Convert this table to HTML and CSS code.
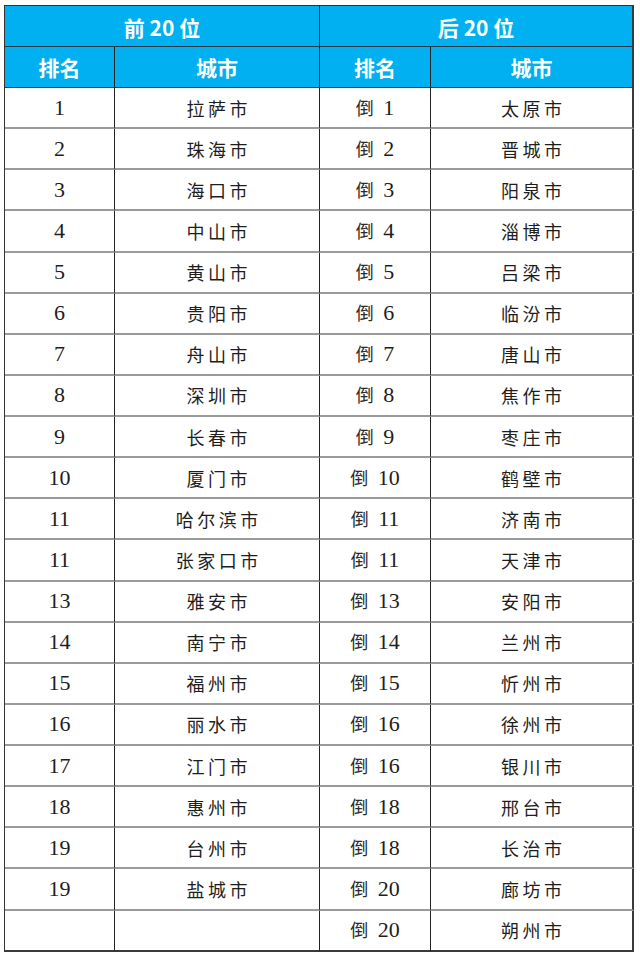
FILE: index.html
```html
<!DOCTYPE html>
<html lang="zh-CN">
<head>
<meta charset="utf-8">
<title>城市排名</title>
<link rel="stylesheet" href="styles.css">
</head>
<body>
<table class="rank">
  <colgroup>
    <col class="c1"><col class="c2"><col class="c3"><col class="c4">
  </colgroup>
  <thead>
    <tr class="h1">
      <th colspan="2">前 20 位</th>
      <th colspan="2" class="last">后 20 位</th>
    </tr>
    <tr class="h2">
      <th>排名</th><th>城市</th><th>排名</th><th class="last">城市</th>
    </tr>
  </thead>
  <tbody>
    <tr><td class="num">1</td><td class="city">拉萨市</td><td class="num"><span class="dao">倒</span> 1</td><td class="city last">太原市</td></tr>
    <tr><td class="num">2</td><td class="city">珠海市</td><td class="num"><span class="dao">倒</span> 2</td><td class="city last">晋城市</td></tr>
    <tr><td class="num">3</td><td class="city">海口市</td><td class="num"><span class="dao">倒</span> 3</td><td class="city last">阳泉市</td></tr>
    <tr><td class="num">4</td><td class="city">中山市</td><td class="num"><span class="dao">倒</span> 4</td><td class="city last">淄博市</td></tr>
    <tr><td class="num">5</td><td class="city">黄山市</td><td class="num"><span class="dao">倒</span> 5</td><td class="city last">吕梁市</td></tr>
    <tr><td class="num">6</td><td class="city">贵阳市</td><td class="num"><span class="dao">倒</span> 6</td><td class="city last">临汾市</td></tr>
    <tr><td class="num">7</td><td class="city">舟山市</td><td class="num"><span class="dao">倒</span> 7</td><td class="city last">唐山市</td></tr>
    <tr><td class="num">8</td><td class="city">深圳市</td><td class="num"><span class="dao">倒</span> 8</td><td class="city last">焦作市</td></tr>
    <tr><td class="num">9</td><td class="city">长春市</td><td class="num"><span class="dao">倒</span> 9</td><td class="city last">枣庄市</td></tr>
    <tr><td class="num">10</td><td class="city">厦门市</td><td class="num"><span class="dao">倒</span> 10</td><td class="city last">鹤壁市</td></tr>
    <tr><td class="num">11</td><td class="city">哈尔滨市</td><td class="num"><span class="dao">倒</span> 11</td><td class="city last">济南市</td></tr>
    <tr><td class="num">11</td><td class="city">张家口市</td><td class="num"><span class="dao">倒</span> 11</td><td class="city last">天津市</td></tr>
    <tr><td class="num">13</td><td class="city">雅安市</td><td class="num"><span class="dao">倒</span> 13</td><td class="city last">安阳市</td></tr>
    <tr><td class="num">14</td><td class="city">南宁市</td><td class="num"><span class="dao">倒</span> 14</td><td class="city last">兰州市</td></tr>
    <tr><td class="num">15</td><td class="city">福州市</td><td class="num"><span class="dao">倒</span> 15</td><td class="city last">忻州市</td></tr>
    <tr><td class="num">16</td><td class="city">丽水市</td><td class="num"><span class="dao">倒</span> 16</td><td class="city last">徐州市</td></tr>
    <tr><td class="num">17</td><td class="city">江门市</td><td class="num"><span class="dao">倒</span> 16</td><td class="city last">银川市</td></tr>
    <tr><td class="num">18</td><td class="city">惠州市</td><td class="num"><span class="dao">倒</span> 18</td><td class="city last">邢台市</td></tr>
    <tr><td class="num">19</td><td class="city">台州市</td><td class="num"><span class="dao">倒</span> 18</td><td class="city last">长治市</td></tr>
    <tr><td class="num">19</td><td class="city">盐城市</td><td class="num"><span class="dao">倒</span> 20</td><td class="city last">廊坊市</td></tr>
    <tr class="end"><td class="num"></td><td class="city"></td><td class="num"><span class="dao">倒</span> 20</td><td class="city last">朔州市</td></tr>
  </tbody>
</table>
</body>
</html>
```
FILE: styles.css
```css
html, body {
  background: #ffffff;
}
body {
  margin: 5px 0 0 4px;
}
.rank {
  border-collapse: separate;
  border-spacing: 0;
  table-layout: fixed;
  width: 630px;
  border-top: 1px solid #333333;
  border-left: 1px solid #333333;
}
.c1 { width: 110px; }
.c2 { width: 205px; }
.c3 { width: 111px; }
.c4 { width: 203px; }

.rank th,
.rank td {
  box-sizing: border-box;
  padding: 0;
  text-align: center;
  vertical-align: middle;
  border-right: 1px solid #222222;
}
.rank th {
  background: #00b0f0;
  color: #ffffff;
  font-family: "Noto Sans CJK SC", "Noto Sans", sans-serif;
  font-weight: 700;
  font-size: 21px;
  height: 41px;
  border-bottom: 1px solid #2a3a44;
  line-height: 1;
}
.rank .h1 th {
  padding-top: 2px;
}
.rank td {
  height: 41.14px;
  border-bottom: 2px solid #9a9a9a;
  color: #1e1e1e;
  line-height: 1;
}
.rank .end td {
  border-bottom: 2px solid #3a3a3a;
}
.rank .last {
  border-right: 2px solid #3a3a3a;
}
.num {
  font-family: "Liberation Serif", "Noto Sans CJK SC", serif;
  font-size: 22px;
  padding-top: 2px;
}
.dao {
  font-family: "Noto Sans CJK SC", sans-serif;
  font-size: 18px;
  font-weight: 400;
  margin-right: 4px;
  color: #2a2a2a;
}
.city {
  font-family: "Noto Sans CJK SC", sans-serif;
  font-size: 18px;
  letter-spacing: 3.5px;
  text-indent: 3.5px;
  color: #2a2a2a;
  padding-top: 2px;
}
```
